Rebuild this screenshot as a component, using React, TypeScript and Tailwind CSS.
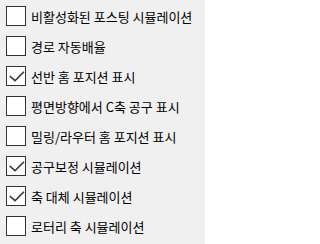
const items: { label: string; checked: boolean }[] = [
  { label: '비활성화된 포스팅 시뮬레이션', checked: false },
  { label: '경로 자동배율', checked: false },
  { label: '선반 홈 포지션 표시', checked: true },
  { label: '평면방향에서 C축 공구 표시', checked: false },
  { label: '밀링/라우터 홈 포지션 표시', checked: false },
  { label: '공구보정 시뮬레이션', checked: true },
  { label: '축 대체 시뮬레이션', checked: true },
  { label: '로터리 축 시뮬레이션', checked: false },
];

function CheckBox({ checked }: { checked: boolean }) {
  return (
    <span className="w-5 h-5 shrink-0 border border-[#333333] bg-white flex items-center justify-center">
      {checked && (
        <svg width="18" height="18" viewBox="0 0 18 18" fill="none">
          <path d="M2.7 9 L8 13.7 L17 4.7" stroke="#333333" strokeWidth="1.6" />
        </svg>
      )}
    </span>
  );
}

export default function App() {
  return (
    <div
      className="w-[205px] h-[244px] bg-[#f0f0f0] pt-[6px] pl-[6px] flex flex-col gap-[10px] overflow-hidden"
      style={{ fontFamily: '"Noto Sans CJK KR", "Noto Sans", sans-serif' }}
    >
      {items.map((item) => (
        <label key={item.label} className="flex items-center gap-[5px] h-5">
          <CheckBox checked={item.checked} />
          <span className="text-[13px] leading-none text-black whitespace-nowrap">{item.label}</span>
        </label>
      ))}
    </div>
  );
}
